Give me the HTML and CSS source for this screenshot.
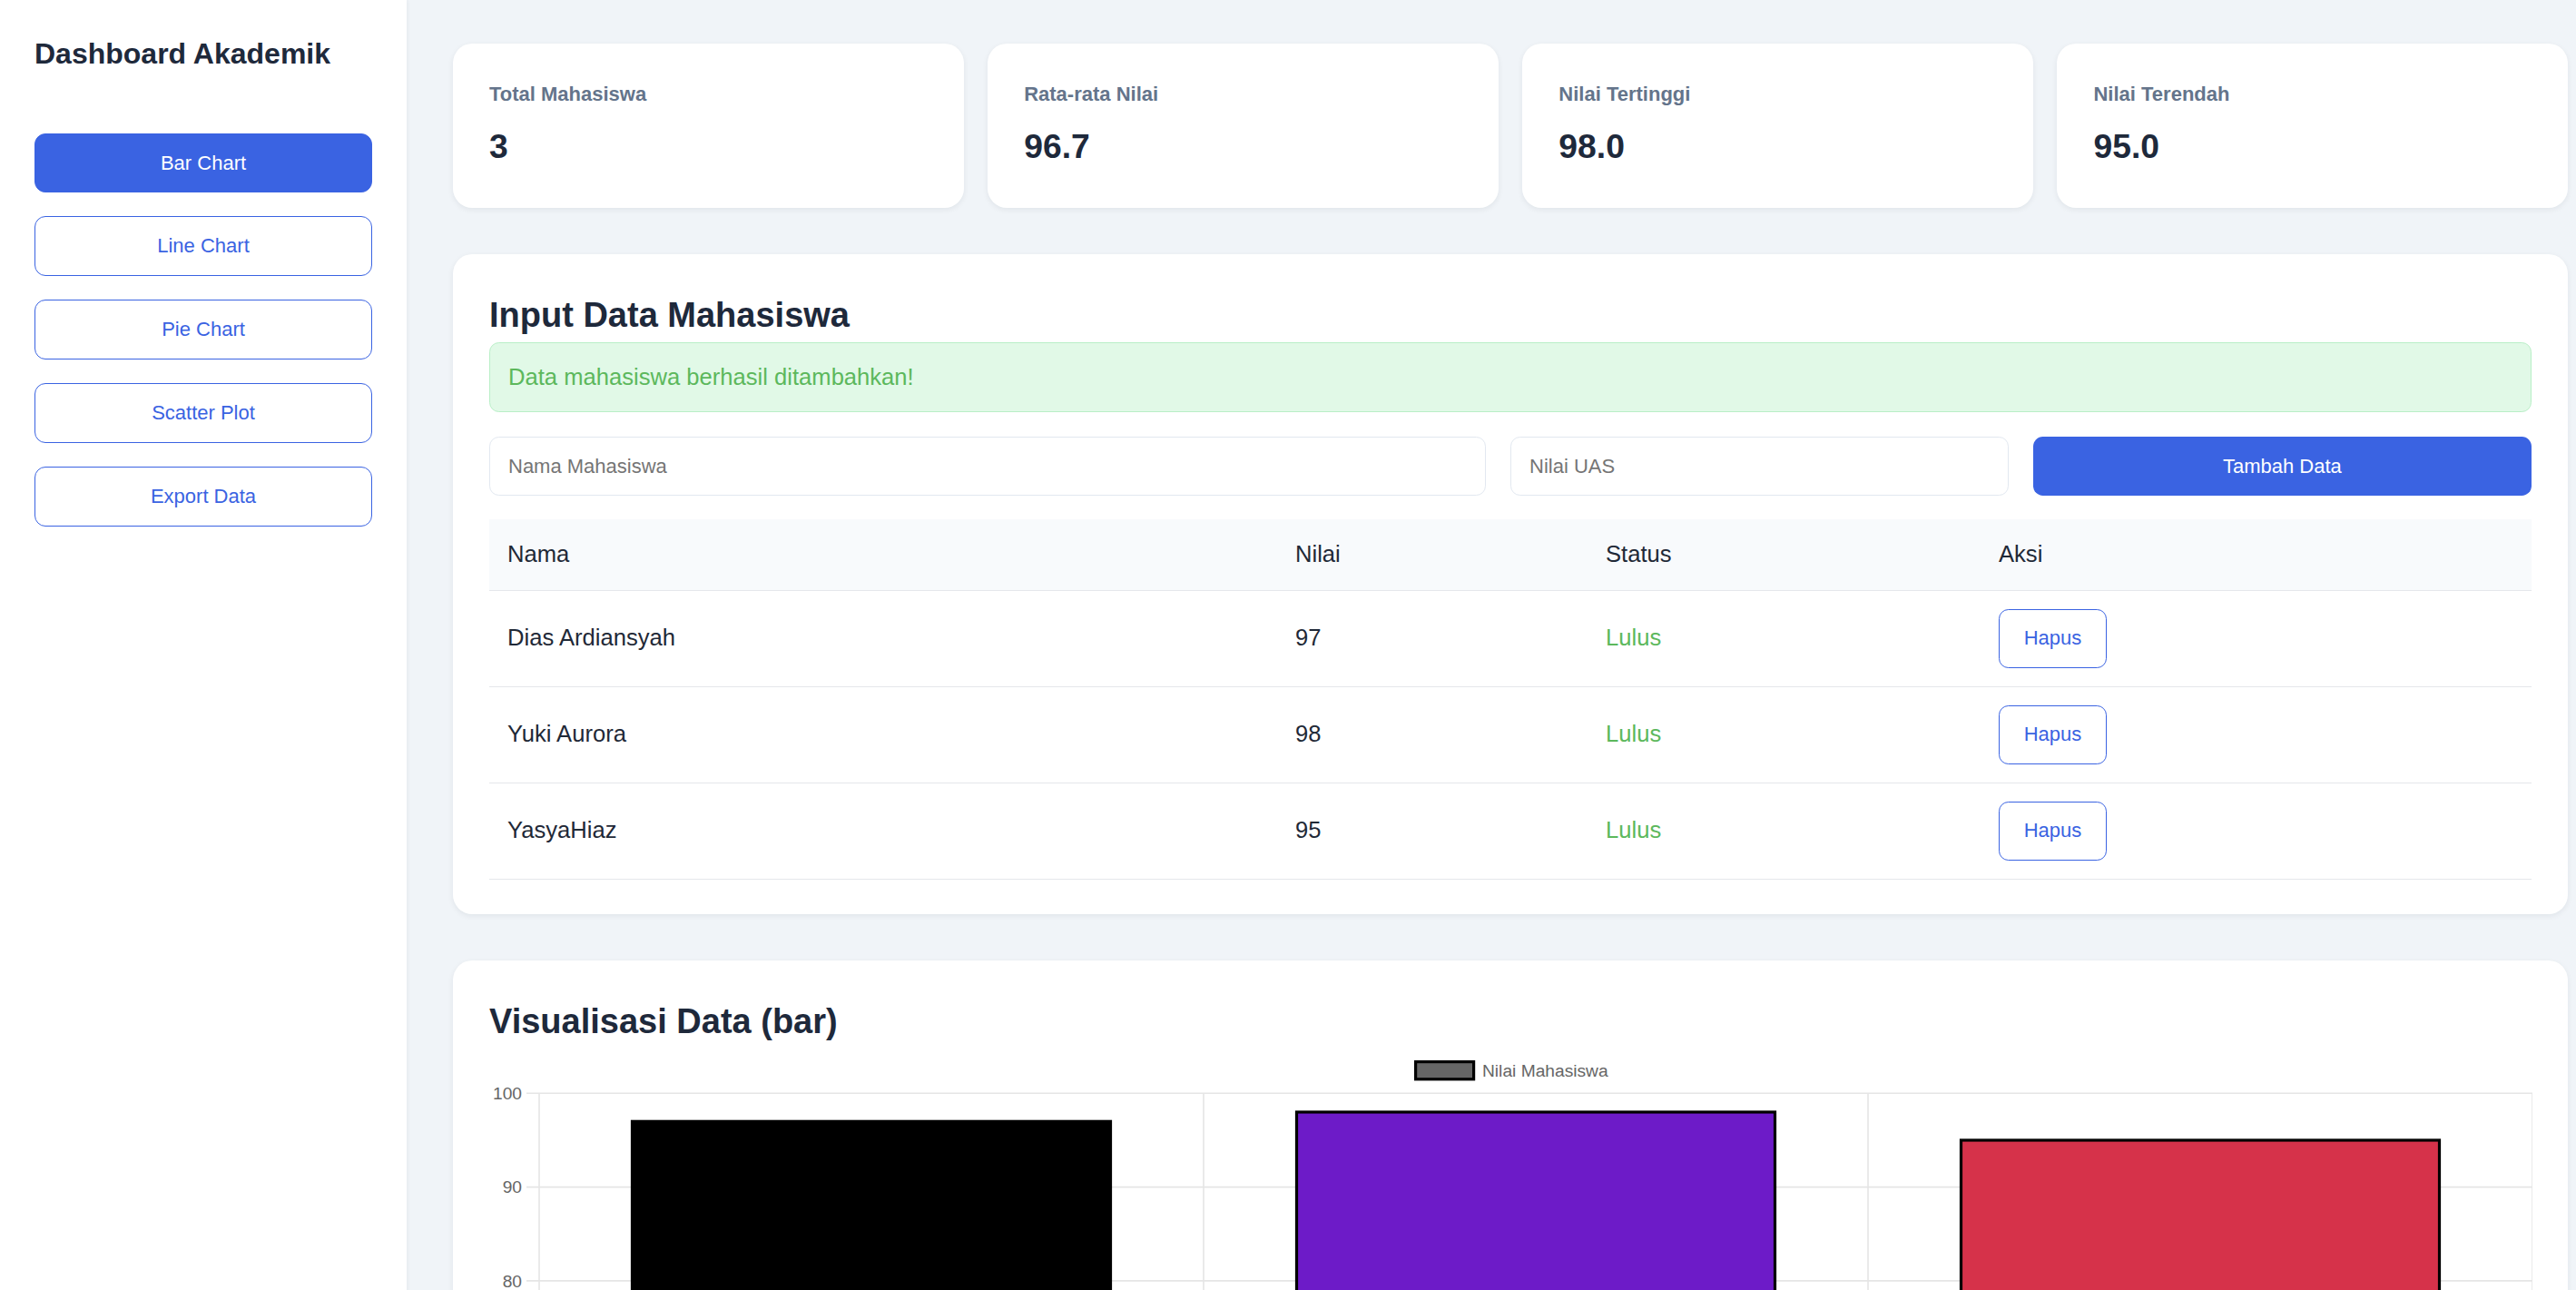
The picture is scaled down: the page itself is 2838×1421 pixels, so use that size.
FILE: index.html
```html
<!DOCTYPE html>
<html lang="id">
<head>
<meta charset="utf-8">
<title>Dashboard Akademik</title>
<link rel="stylesheet" href="styles.css">
</head>
<body>
<div class="layout">
  <aside class="sidebar">
    <h2 class="brand">Dashboard Akademik</h2>
    <nav class="nav">
      <button class="nav-btn active">Bar Chart</button>
      <button class="nav-btn">Line Chart</button>
      <button class="nav-btn">Pie Chart</button>
      <button class="nav-btn">Scatter Plot</button>
      <button class="nav-btn">Export Data</button>
    </nav>
  </aside>
  <main class="main">
    <section class="stats">
      <div class="stat-card"><div class="stat-label">Total Mahasiswa</div><div class="stat-value">3</div></div>
      <div class="stat-card"><div class="stat-label">Rata-rata Nilai</div><div class="stat-value">96.7</div></div>
      <div class="stat-card"><div class="stat-label">Nilai Tertinggi</div><div class="stat-value">98.0</div></div>
      <div class="stat-card"><div class="stat-label">Nilai Terendah</div><div class="stat-value">95.0</div></div>
    </section>

    <section class="card">
      <h2 class="card-title">Input Data Mahasiswa</h2>
      <div class="alert">Data mahasiswa berhasil ditambahkan!</div>
      <form class="form-row">
        <input class="field" type="text" placeholder="Nama Mahasiswa">
        <input class="field" type="text" placeholder="Nilai UAS">
        <button class="submit" type="button">Tambah Data</button>
      </form>
      <table class="table">
        <colgroup>
          <col class="c-nama"><col class="c-nilai"><col class="c-status"><col>
        </colgroup>
        <thead>
          <tr><th>Nama</th><th>Nilai</th><th>Status</th><th>Aksi</th></tr>
        </thead>
        <tbody>
          <tr><td>Dias Ardiansyah</td><td>97</td><td class="pass">Lulus</td><td><button class="del">Hapus</button></td></tr>
          <tr><td>Yuki Aurora</td><td>98</td><td class="pass">Lulus</td><td><button class="del">Hapus</button></td></tr>
          <tr><td>YasyaHiaz</td><td>95</td><td class="pass">Lulus</td><td><button class="del">Hapus</button></td></tr>
        </tbody>
      </table>
    </section>

    <section class="card">
      <h2 class="card-title chart-title">Visualisasi Data (bar)</h2>
      <svg class="chart" width="2251" height="1130" viewBox="0 0 2251 1130" xmlns="http://www.w3.org/2000/svg">
        <g class="legend">
          <rect x="1020.6" y="12.6" width="64" height="19.2" fill="#666666" stroke="#000" stroke-width="3.2"/>
          <text x="1094" y="28.5" font-size="19.2" fill="#666666">Nilai Mahasiswa</text>
        </g>
        <g stroke="#e5e5e5" stroke-width="1.6">
          <line x1="41" y1="47.3" x2="2251" y2="47.3"/>
          <line x1="41" y1="150.6" x2="2251" y2="150.6"/>
          <line x1="41" y1="253.9" x2="2251" y2="253.9"/>
          <line x1="41" y1="357.2" x2="2251" y2="357.2"/>
          <line x1="41" y1="460.5" x2="2251" y2="460.5"/>
          <line x1="41" y1="563.8" x2="2251" y2="563.8"/>
          <line x1="41" y1="667.1" x2="2251" y2="667.1"/>
          <line x1="41" y1="770.4" x2="2251" y2="770.4"/>
          <line x1="41" y1="873.7" x2="2251" y2="873.7"/>
          <line x1="41" y1="977" x2="2251" y2="977"/>
          <line x1="41" y1="1080.3" x2="2251" y2="1080.3"/>
          <line x1="55" y1="47.3" x2="55" y2="1094"/>
          <line x1="787" y1="47.3" x2="787" y2="1094"/>
          <line x1="1519" y1="47.3" x2="1519" y2="1094"/>
          <line x1="2251" y1="47.3" x2="2251" y2="1094"/>
        </g>
        <g font-size="19.2" fill="#666666" text-anchor="end">
          <text x="36" y="54">100</text>
          <text x="36" y="157.4">90</text>
          <text x="36" y="260.7">80</text>
          <text x="36" y="364">70</text>
          <text x="36" y="467.3">60</text>
          <text x="36" y="570.6">50</text>
          <text x="36" y="673.9">40</text>
          <text x="36" y="777.2">30</text>
          <text x="36" y="880.5">20</text>
          <text x="36" y="983.8">10</text>
          <text x="36" y="1087.1">0</text>
        </g>
        <g stroke="#000" stroke-width="3.2">
          <rect x="157.5" y="78.3" width="527" height="1002" fill="#000000"/>
          <rect x="889.5" y="68" width="527" height="1012.3" fill="#6d1bc8"/>
          <rect x="1621.5" y="99" width="527" height="981.3" fill="#d6324a"/>
        </g>
        <g font-size="19.2" fill="#666666" text-anchor="middle">
          <text x="421" y="1114">Dias Ardiansyah</text>
          <text x="1153" y="1114">Yuki Aurora</text>
          <text x="1885" y="1114">YasyaHiaz</text>
        </g>
      </svg>
    </section>
  </main>
</div>
</body>
</html>
```

FILE: styles.css
```css
* {
  box-sizing: border-box;
}

html, body {
  margin: 0;
  padding: 0;
}

body {
  font-family: "Liberation Sans", Arial, Helvetica, sans-serif;
  background: #f0f4f8;
  color: #1e293b;
}

.layout {
  display: flex;
  align-items: stretch;
  min-height: 100vh;
}

.sidebar {
  width: 448px;
  flex: 0 0 448px;
  background: #ffffff;
  padding: 41px 38px 40px 38px;
  box-shadow: 1px 0 4px rgba(15, 23, 42, 0.05);
}

.brand {
  margin: 0;
  font-size: 32px;
  font-weight: 700;
  line-height: 37px;
  color: #1e293b;
}

.nav {
  margin-top: 69px;
  display: flex;
  flex-direction: column;
  gap: 26px;
}

.nav-btn {
  display: block;
  width: 100%;
  height: 66px;
  font-family: inherit;
  font-size: 22px;
  color: #3a63e2;
  background: #ffffff;
  border: 1.5px solid #3a63e2;
  border-radius: 12px;
  cursor: pointer;
}

.nav-btn.active {
  background: #3a63e2;
  color: #ffffff;
  height: 65px;
}

.main {
  flex: 1 1 auto;
  min-width: 0;
  padding: 48px 9px 60px 51px;
}

.stats {
  display: grid;
  grid-template-columns: repeat(4, 1fr);
  gap: 26.67px;
  margin-bottom: 51px;
}

.stat-card {
  background: #ffffff;
  border-radius: 21.33px;
  height: 181px;
  padding: 43px 40px 0 40px;
  box-shadow: 0 2px 6px rgba(15, 23, 42, 0.07);
}

.stat-label {
  font-size: 22px;
  font-weight: 700;
  color: #64748b;
  line-height: 25.3px;
}

.stat-value {
  margin-top: 24px;
  font-size: 37.3px;
  font-weight: 700;
  color: #1e293b;
  line-height: 43px;
}

.card {
  background: #ffffff;
  border-radius: 21.33px;
  padding: 46px 40px 38px 40px;
  margin-bottom: 51px;
  box-shadow: 0 2px 6px rgba(15, 23, 42, 0.07);
}

.card-title {
  margin: 0;
  font-size: 38px;
  font-weight: 700;
  line-height: 43.7px;
  color: #1e293b;
}

.alert {
  margin-top: 7px;
  background: #e1f9e7;
  border: 1.33px solid #b9efc7;
  border-radius: 10.67px;
  padding: 23px 20px;
  font-size: 25.6px;
  line-height: 29.4px;
  color: #5cb85c;
}

.form-row {
  margin: 27px 0 26px 0;
  display: grid;
  grid-template-columns: 2fr 1fr 1fr;
  gap: 26.67px;
}

.field {
  height: 65px;
  font-family: inherit;
  font-size: 22px;
  padding: 0 20px;
  border: 1.33px solid #e2e8f0;
  border-radius: 10.67px;
  background: #ffffff;
  color: #1e293b;
  outline: none;
}

.field::placeholder {
  color: #757575;
}

.submit {
  height: 65px;
  font-family: inherit;
  font-size: 22px;
  color: #ffffff;
  background: #3a63e2;
  border: none;
  border-radius: 10.67px;
  cursor: pointer;
}

.table {
  width: 100%;
  border-collapse: collapse;
  font-size: 25.6px;
  color: #1f2937;
}

.c-nama { width: 868px; }
.c-nilai { width: 342px; }
.c-status { width: 433px; }

.table th {
  text-align: left;
  font-weight: 400;
  background: #f8fafc;
  padding: 24px 20px;
  line-height: 29.4px;
  border-bottom: 1.33px solid #e5e7eb;
}

.table td {
  padding: 20px 20px;
  line-height: 29.4px;
  border-bottom: 1.33px solid #e5e7eb;
  vertical-align: middle;
}

.table td.pass {
  color: #5cb85c;
}

.del {
  height: 65px;
  padding: 0 26.67px;
  font-family: inherit;
  font-size: 22px;
  color: #3a63e2;
  background: #ffffff;
  border: 1.5px solid #3a63e2;
  border-radius: 10.67px;
  cursor: pointer;
}

.chart-title {
  margin-bottom: 10px;
}

.chart {
  display: block;
  font-family: "Liberation Sans", Arial, Helvetica, sans-serif;
}
```
